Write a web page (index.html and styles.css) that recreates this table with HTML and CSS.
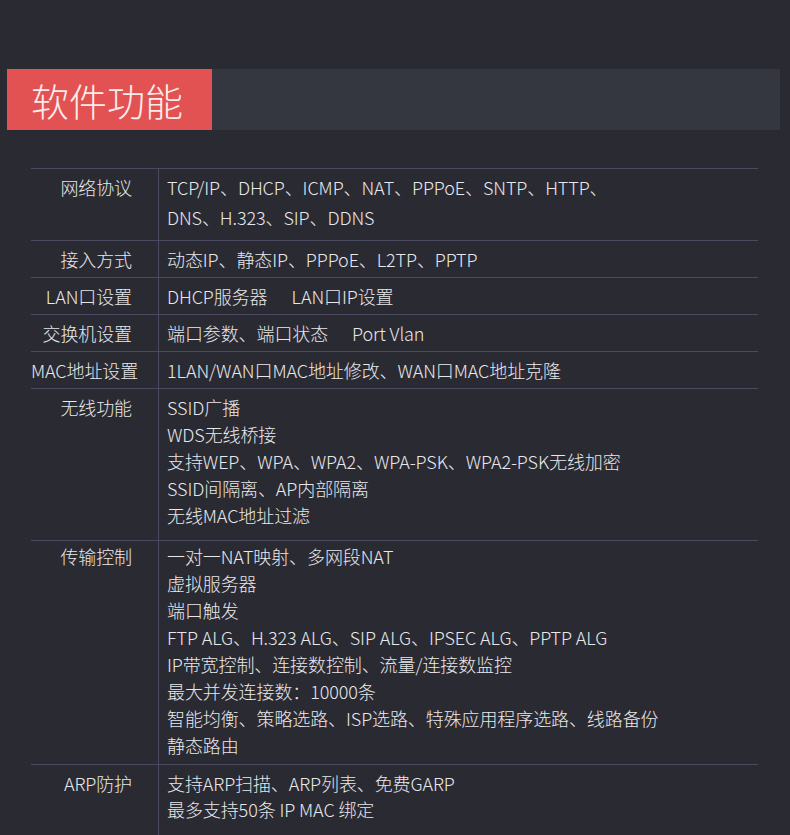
FILE: index.html
```html
<!DOCTYPE html>
<html lang="zh-CN">
<head>
  <meta charset="UTF-8" />
  <title>软件功能</title>
  <link rel="stylesheet" href="styles.css">
</head>
<body>

<div class="section-head">
  <h2 class="section-title">软件功能</h2>
</div>

<div class="spec-table">
  <div class="spec-row spec-row--wide">
    <div class="spec-label">网络协议</div>
    <div class="spec-value">
      <p>TCP/IP、DHCP、ICMP、NAT、PPPoE、SNTP、HTTP、</p>
      <p>DNS、H.323、SIP、DDNS</p>
    </div>
  </div>

  <div class="spec-row">
    <div class="spec-label">接入方式</div>
    <div class="spec-value">
      <p>动态IP、静态IP、PPPoE、L2TP、PPTP</p>
    </div>
  </div>

  <div class="spec-row">
    <div class="spec-label">LAN口设置</div>
    <div class="spec-value">
      <p>DHCP服务器<span class="gap"></span>LAN口IP设置</p>
    </div>
  </div>

  <div class="spec-row">
    <div class="spec-label">交换机设置</div>
    <div class="spec-value">
      <p>端口参数、端口状态<span class="gap"></span>Port Vlan</p>
    </div>
  </div>

  <div class="spec-row spec-row--short">
    <div class="spec-label">MAC地址设置</div>
    <div class="spec-value">
      <p>1LAN/WAN口MAC地址修改、WAN口MAC地址克隆</p>
    </div>
  </div>

  <div class="spec-row spec-row--wireless">
    <div class="spec-label">无线功能</div>
    <div class="spec-value">
      <p>SSID广播</p>
      <p>WDS无线桥接</p>
      <p class="shift-left">支持WEP、WPA、WPA2、WPA-PSK、WPA2-PSK无线加密</p>
      <p>SSID间隔离、AP内部隔离</p>
      <p>无线MAC地址过滤</p>
    </div>
  </div>

  <div class="spec-row spec-row--transfer">
    <div class="spec-label">传输控制</div>
    <div class="spec-value">
      <p>一对一NAT映射、多网段NAT</p>
      <p>虚拟服务器</p>
      <p>端口触发</p>
      <p>FTP ALG、H.323 ALG、SIP ALG、IPSEC ALG、PPTP ALG</p>
      <p>IP带宽控制、连接数控制、流量/连接数监控</p>
      <p>最大并发连接数：10000条</p>
      <p>智能均衡、策略选路、ISP选路、特殊应用程序选路、线路备份</p>
      <p>静态路由</p>
    </div>
  </div>

  <div class="spec-row spec-row--last">
    <div class="spec-label">ARP防护</div>
    <div class="spec-value">
      <p>支持ARP扫描、ARP列表、免费GARP</p>
      <p>最多支持50条 IP MAC 绑定</p>
    </div>
  </div>
</div>

</body>
</html>
```

FILE: styles.css
```css
body {
  margin: 0;
  background: #2a2a33;
  color: #e8e8ea;
  font-family: "Noto Sans CJK SC", "Noto Sans", sans-serif;
  font-size: 18px;
  font-weight: 300;
  letter-spacing: -0.1px;
  overflow: hidden;
}
.section-head {
  display: flex;
  height: 61px;
  margin: 69px 10px 0 7px;
  background: #343640;
}
.section-title {
  width: 205px;
  box-sizing: border-box;
  margin: 0;
  padding-left: 24px;
  background: #e25252;
  color: #fbecec;
  font-size: 38px;
  font-weight: 200;
  line-height: 61px;
  letter-spacing: 0;
}
.spec-table {
  width: 727px;
  margin: 38px 0 0 31px;
}
.spec-row {
  display: flex;
  border-top: 1px solid #4a4960;
  line-height: 27px;
}
.spec-label {
  width: 127px;
  flex-shrink: 0;
  box-sizing: border-box;
  padding: 5px 26px 4px 0;
  text-align: right;
  white-space: nowrap;
}
.spec-value {
  flex: 1;
  border-left: 1px solid #4a4960;
  padding: 5px 0 4px 8px;
  white-space: nowrap;
}
.spec-value p {
  margin: 0;
}
.gap {
  display: inline-block;
  width: 24px;
}
.shift-left {
  margin-left: -2px;
}

/* rows with their own spacing */
.spec-row--wide {
  line-height: 30px;
}
.spec-row--wide .spec-label,
.spec-row--wide .spec-value {
  padding-top: 3px;
  padding-bottom: 8px;
}
.spec-row--short .spec-value {
  padding-bottom: 3px;
}
.spec-row--wireless .spec-value {
  padding-bottom: 11px;
}
.spec-row--transfer .spec-label,
.spec-row--transfer .spec-value {
  padding-top: 2px;
  padding-bottom: 5px;
}
.spec-row--last {
  line-height: 26px;
}
.spec-row--last .spec-value {
  padding-bottom: 40px;
}
```
